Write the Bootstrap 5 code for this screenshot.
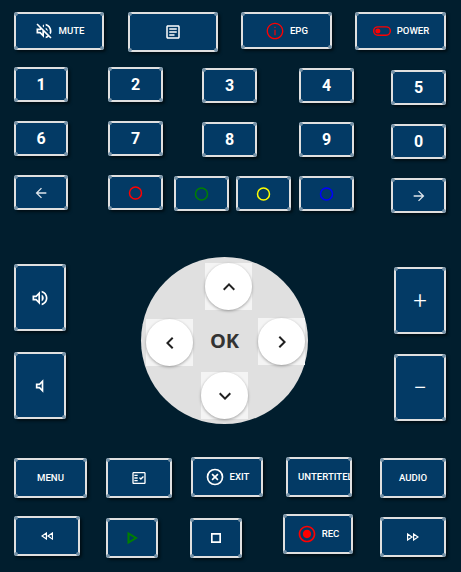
<!DOCTYPE html>
<html lang="en">
<head>
  <meta charset="UTF-8" />
  <title>Remote</title>
  <link href="https://cdn.jsdelivr.net/npm/bootstrap@5.3.2/dist/css/bootstrap.min.css" rel="stylesheet" />
  <style>
    body {
      margin: 0;
      background-color: #011e2e;
      font-family: Roboto, sans-serif;
    }

    .remote {
      width: 461px;
      height: 572px;
      padding: 12px 15px 0 14px;
      overflow: hidden;
    }

    /* key */
    .key {
      position: relative;
      display: flex;
      align-items: center;
      justify-content: center;
      flex: none;
      gap: 5px;
      padding: 0;
      color: #fff;
      background-color: #033a65;
      border: 2px solid #e0e0e0;
      border-radius: 3px;
      box-shadow: 2px 2px 3px rgba(0, 0, 0, .55);
      font-size: 9.6px;
      font-weight: 500;
      line-height: 1;
      white-space: nowrap;
    }

    /* the small grey dots on the four corners */
    .key::after {
      content: "";
      position: absolute;
      inset: -2px;
      pointer-events: none;
      background:
        radial-gradient(circle, #7793a8 1.3px, transparent 2.4px) left top / 4px 4px no-repeat,
        radial-gradient(circle, #7793a8 1.3px, transparent 2.4px) right top / 4px 4px no-repeat,
        radial-gradient(circle, #7793a8 1.3px, transparent 2.4px) left bottom / 4px 4px no-repeat,
        radial-gradient(circle, #7793a8 1.3px, transparent 2.4px) right bottom / 4px 4px no-repeat;
    }

    .key:hover { color: #fff; background-color: #033a65; border-color: #e0e0e0; }
    .key svg { flex: none; fill: currentColor; }
    .key .ol { fill: none; stroke: currentColor; }
    .num { font-size: 16px; font-weight: 700; }
    .sign { font-size: 24px; font-weight: 300; }
    .clip-txt { display: block; width: 100%; padding-left: 10px; overflow: hidden; text-align: left; }
    .red { color: #f00; }
    .grn { color: #008000; }
    .ylw { color: #ff0; }
    .blu { color: #00f; }
    .pale { color: #dfe6ec; }

    /* sizes */
    .kw-52 { width: 52px; } .kw-54 { width: 54px; } .kw-55 { width: 55px; }
    .kw-66 { width: 66px; } .kw-70 { width: 70px; } .kw-72 { width: 72px; }
    .kw-73 { width: 73px; } .kw-90 { width: 90px; } .kw-91 { width: 91px; }
    .kh-35 { height: 35px; } .kh-37 { height: 37px; } .kh-38 { height: 38px; }
    .kh-40 { height: 40px; } .kh-67 { height: 67px; }

    /* gaps between keys */
    .gl-7 { margin-left: 7px; } .gl-8 { margin-left: 8px; } .gl-11 { margin-left: 11px; }
    .gl-19 { margin-left: 19px; } .gl-23 { margin-left: 23px; } .gl-24 { margin-left: 24px; }
    .gl-26 { margin-left: 26px; } .gl-27 { margin-left: 27px; } .gl-28 { margin-left: 28px; }
    .gl-32 { margin-left: 32px; } .gl-37 { margin-left: 37px; } .gl-39 { margin-left: 39px; }
    .gl-40 { margin-left: 40px; } .gl-41 { margin-left: 41px; } .gl-42 { margin-left: 42px; }
    .gt-1 { margin-top: 1px; } .gt-2 { margin-top: 2px; } .gt-3 { margin-top: 3px; }
    .gt-4 { margin-top: 4px; }

    /* row spacing */
    .rw-15 { margin-top: 15px; } .rw-16 { margin-top: 16px; } .rw-33 { margin-top: 33px; }
    .mid { margin-top: 44px; }
    .vol-l { margin-top: 7px; gap: 21px; }
    .vol-r { margin-top: 10px; margin-left: 86px; gap: 20px; }

    /* d-pad */
    .disc {
      position: relative;
      width: 167px;
      height: 167px;
      margin-left: 75px;
      flex: none;
      background-color: #e0e0e0;
      border-radius: 50%;
      color: #333;
      font-family: "Open Sans", sans-serif;
      font-size: 20px;
      font-weight: 700;
    }

    .arrow-cell {
      position: absolute;
      width: 47px;
      height: 47px;
      background-color: #f4f4f4;
    }

    .arrow-btn {
      display: flex;
      align-items: center;
      justify-content: center;
      width: 100%;
      height: 100%;
      padding: 0;
      background-color: #fff;
      border: 0;
      border-radius: 50%;
      box-shadow: 0 1px 3px rgba(0, 0, 0, .35);
    }

    .arrow-btn svg { fill: #212121; }
    .at-up { left: 64px; top: 6px; }
    .at-left { left: 5px; top: 62px; }
    .at-right { left: 117px; top: 61px; }
    .at-down { left: 60px; top: 115px; }
  </style>
</head>
<body>
  <div class="remote">

    <div class="d-flex align-items-start">
      <button class="btn key kw-90 kh-38">
        <svg width="20" height="20" viewBox="0 0 24 24"><path d="M4.34 2.93 2.93 4.34 7.29 8.7 7 9H3v6h4l5 5v-6.59l4.18 4.18c-.65.49-1.38.88-2.18 1.11v2.06c1.34-.3 2.57-.92 3.61-1.75l2.05 2.05 1.41-1.41L4.34 2.93zM10 15.17 7.83 13H5v-2h2.83l.88-.88L10 11.41v3.76zM19 12c0 .82-.15 1.61-.41 2.34l1.53 1.53c.56-1.17.88-2.48.88-3.87 0-4.28-2.99-7.86-7-8.77v2.06c2.89.86 5 3.54 5 6.71zm-7-8-1.88 1.88L12 7.76zm4.5 8c0-1.77-1.02-3.29-2.5-4.03v1.79l2.48 2.48c.01-.08.02-.16.02-.24z"/></svg>
        MUTE
      </button>
      <button class="btn key kw-90 kh-40 gl-24">
        <svg width="18" height="18" viewBox="0 0 24 24"><path d="M19 5v14H5V5h14m0-2H5c-1.1 0-2 .9-2 2v14c0 1.1.9 2 2 2h14c1.1 0 2-.9 2-2V5c0-1.1-.9-2-2-2zM14 17H7v-2h7v2zm3-4H7v-2h10v2zm0-4H7V7h10v2z"/></svg>
      </button>
      <button class="btn key kw-91 kh-37 gl-23">
        <svg class="red" width="20" height="20" viewBox="0 0 24 24"><path d="M12 2C6.48 2 2 6.48 2 12s4.48 10 10 10 10-4.48 10-10S17.52 2 12 2zm0 18.4c-4.63 0-8.4-3.77-8.4-8.4S7.37 3.6 12 3.6s8.4 3.77 8.4 8.4-3.77 8.4-8.4 8.4zM11.3 10.5h1.4V17h-1.4zM11.3 7h1.4v1.5h-1.4z"/></svg>
        EPG
      </button>
      <button class="btn key kw-91 kh-38 gl-23">
        <svg class="red" width="20" height="20" viewBox="0 0 24 24"><rect class="ol" x="2" y="7" width="20" height="10" rx="5" stroke-width="1.7"/><circle cx="7" cy="12" r="3"/></svg>
        POWER
      </button>
    </div>

    <div class="d-flex align-items-start rw-15">
      <button class="btn key num kw-54 kh-35">1</button>
      <button class="btn key num kw-55 kh-35 gl-40">2</button>
      <button class="btn key num kw-55 kh-35 gl-39 gt-1">3</button>
      <button class="btn key num kw-55 kh-35 gl-42 gt-1">4</button>
      <button class="btn key num kw-55 kh-35 gl-37 gt-3">5</button>
    </div>

    <div class="d-flex align-items-start rw-16">
      <button class="btn key num kw-54 kh-35">6</button>
      <button class="btn key num kw-55 kh-35 gl-40">7</button>
      <button class="btn key num kw-55 kh-35 gl-39 gt-1">8</button>
      <button class="btn key num kw-55 kh-35 gl-42 gt-1">9</button>
      <button class="btn key num kw-55 kh-35 gl-37 gt-3">0</button>
    </div>

    <div class="d-flex align-items-start rw-16">
      <button class="btn key pale kw-54 kh-35">
        <svg width="16" height="16" viewBox="0 0 24 24"><path d="M20 11H7.83l5.59-5.59L12 4l-8 8 8 8 1.41-1.41L7.83 13H20v-2z"/></svg>
      </button>
      <button class="btn key red kw-55 kh-35 gl-40">
        <svg width="16" height="16" viewBox="0 0 16 16"><circle class="ol" cx="7.5" cy="8" r="6" stroke-width="1.5"/></svg>
      </button>
      <button class="btn key grn kw-55 kh-35 gl-11 gt-1">
        <svg width="16" height="16" viewBox="0 0 16 16"><circle class="ol" cx="7.5" cy="8" r="6" stroke-width="1.5"/></svg>
      </button>
      <button class="btn key ylw kw-55 kh-35 gl-7 gt-1">
        <svg width="16" height="16" viewBox="0 0 16 16"><circle class="ol" cx="7.5" cy="8" r="6" stroke-width="1.5"/></svg>
      </button>
      <button class="btn key blu kw-55 kh-35 gl-8 gt-1">
        <svg width="16" height="16" viewBox="0 0 16 16"><circle class="ol" cx="7.5" cy="8" r="6" stroke-width="1.5"/></svg>
      </button>
      <button class="btn key pale kw-55 kh-35 gl-37 gt-3">
        <svg width="16" height="16" viewBox="0 0 24 24"><path d="M12 4l-1.41 1.41L16.17 11H4v2h12.17l-5.58 5.59L12 20l8-8z"/></svg>
      </button>
    </div>

    <div class="d-flex align-items-start mid">
      <div class="d-flex flex-column vol-l">
        <button class="btn key kw-52 kh-67">
          <svg width="20" height="20" viewBox="0 0 24 24"><path d="M3 9v6h4l5 5V4L7 9H3zm7-.17v6.34L7.83 13H5v-2h2.83L10 8.83zM16.5 12c0-1.77-1.02-3.29-2.5-4.03v8.05c1.48-.73 2.5-2.25 2.5-4.02zM14 3.23v2.06c2.89.86 5 3.54 5 6.71s-2.11 5.85-5 6.71v2.06c4.01-.91 7-4.49 7-8.77 0-4.28-2.99-7.86-7-8.77z"/></svg>
        </button>
        <button class="btn key kw-52 kh-67">
          <svg width="20" height="20" viewBox="0 0 24 24"><path d="M14 8.83v6.34L11.83 13H9v-2h2.83L14 8.83M16 4l-5 5H7v6h4l5 5V4z"/></svg>
        </button>
      </div>

      <div class="disc d-flex align-items-center justify-content-center">
        OK
        <div class="arrow-cell at-up"><button class="arrow-btn"><svg width="24" height="24" viewBox="0 0 24 24"><path d="M7.41 15.41 12 10.83l4.59 4.58L18 14l-6-6-6 6z"/></svg></button></div>
        <div class="arrow-cell at-left"><button class="arrow-btn"><svg width="24" height="24" viewBox="0 0 24 24"><path d="M15.41 16.59 10.83 12l4.58-4.59L14 6l-6 6 6 6z"/></svg></button></div>
        <div class="arrow-cell at-right"><button class="arrow-btn"><svg width="24" height="24" viewBox="0 0 24 24"><path d="M8.59 16.59 13.17 12 8.59 7.41 10 6l6 6-6 6z"/></svg></button></div>
        <div class="arrow-cell at-down"><button class="arrow-btn"><svg width="24" height="24" viewBox="0 0 24 24"><path d="M7.41 8.59 12 13.17l4.59-4.58L18 10l-6 6-6-6z"/></svg></button></div>
      </div>

      <div class="d-flex flex-column vol-r">
        <button class="btn key sign kw-52 kh-67">+</button>
        <button class="btn key sign kw-52 kh-67">&minus;</button>
      </div>
    </div>

    <div class="d-flex align-items-start rw-33">
      <button class="btn key kw-73 kh-40 gt-1">MENU</button>
      <button class="btn key kw-66 kh-40 gl-19 gt-1">
        <svg width="16" height="16" viewBox="0 0 24 24"><path d="M20 3H4c-1.1 0-2 .9-2 2v14c0 1.1.9 2 2 2h16c1.1 0 2-.9 2-2V5c0-1.1-.9-2-2-2zm0 16H4V5h16v14zM19.41 10.42l-1.42-1.42-3.17 3.17-1.41-1.42L12 12.16 14.82 15zM5 7h5v2H5zM5 11h5v2H5zM5 15h5v2H5z"/></svg>
      </button>
      <button class="btn key kw-72 kh-40 gl-19">
        <svg width="20" height="20" viewBox="0 0 24 24"><circle class="ol" cx="12" cy="12" r="9" stroke-width="2"/><path class="ol" d="M8.5 8.5l7 7m0-7l-7 7" stroke-width="2"/></svg>
        EXIT
      </button>
      <button class="btn key kw-66 kh-40 gl-23"><span class="clip-txt">UNTERTITEL</span></button>
      <button class="btn key kw-66 kh-40 gl-28 gt-1">AUDIO</button>
    </div>

    <div class="d-flex align-items-start rw-16">
      <button class="btn key kw-66 kh-40 gt-2">
        <svg width="12" height="8" viewBox="0 0 12 8"><path class="ol" d="M5.4 1v6L1 4zM11.4 1v6L7 4z" stroke-width="1.2"/></svg>
      </button>
      <button class="btn key grn kw-52 kh-40 gl-26 gt-4">
        <svg width="14" height="14" viewBox="0 0 14 14"><path class="ol" d="M3.5 2.5v9L11 7z" stroke-width="2"/></svg>
      </button>
      <button class="btn key kw-52 kh-40 gl-32 gt-4">
        <svg width="20" height="20" viewBox="0 0 24 24"><path d="M16 8v8H8V8h8m2-2H6v12h12V6z"/></svg>
      </button>
      <button class="btn key kw-70 kh-40 gl-41">
        <svg class="red" width="20" height="20" viewBox="0 0 24 24"><path d="M12 7c-2.76 0-5 2.24-5 5s2.24 5 5 5 5-2.24 5-5-2.24-5-5-5zm0-5C6.48 2 2 6.48 2 12s4.48 10 10 10 10-4.48 10-10S17.52 2 12 2zm0 18c-4.42 0-8-3.58-8-8s3.58-8 8-8 8 3.58 8 8-3.58 8-8 8z"/></svg>
        REC
      </button>
      <button class="btn key kw-66 kh-40 gl-27 gt-3">
        <svg width="12" height="8" viewBox="0 0 12 8"><path class="ol" d="M.6 1v6L5 4zM6.6 1v6L11 4z" stroke-width="1.2"/></svg>
      </button>
    </div>

  </div>

  <script src="https://cdn.jsdelivr.net/npm/bootstrap@5.3.2/dist/js/bootstrap.bundle.min.js"></script>
</body>
</html>
